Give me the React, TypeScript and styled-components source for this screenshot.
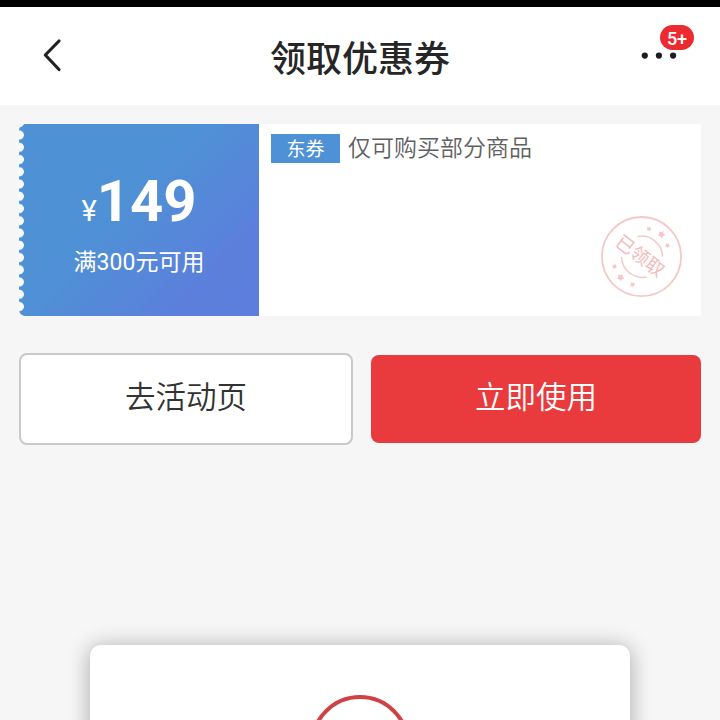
import React from "react";
import styled, { createGlobalStyle } from "styled-components";

const GlobalStyle = createGlobalStyle`
  * { box-sizing: border-box; }
  body {
    margin: 0;
    background: #f6f6f6;
    font-family: Roboto, "Noto Sans CJK SC", sans-serif;
  }
`;

const Screen = styled.div`
  width: 720px;
  height: 720px;
  overflow: hidden;
  display: flex;
  flex-direction: column;
  background: #f6f6f6;
`;

const StatusBar = styled.div`
  flex: none;
  height: 7px;
  background: #000;
`;

const Header = styled.header`
  flex: none;
  height: 98px;
  display: grid;
  grid-template-columns: 100px 1fr 100px;
  align-items: center;
  background: #fff;
`;

const IconButton = styled.button`
  position: relative;
  width: 100px;
  height: 98px;
  padding: 0;
  border: 0;
  background: none;
  font-family: inherit;

  svg { display: block; }
`;

const Title = styled.h1`
  margin: 7px 0 0;
  text-align: center;
  font-size: 36px;
  line-height: 52px;
  font-weight: 500;
  color: #262626;
`;

const Badge = styled.span`
  position: absolute;
  left: 40px;
  top: 18px;
  width: 34px;
  height: 25px;
  border-radius: 13px;
  background: #ec2b31;
  color: #fff;
  font-size: 18px;
  line-height: 27px;
  font-weight: 500;
  text-align: center;
`;

const Coupon = styled.section`
  flex: none;
  display: flex;
  height: 192px;
  margin: 19px 19px 0;
  background: #fff;
  border-radius: 6px 0 0 6px;
`;

const Value = styled.div`
  width: 240px;
  display: flex;
  flex-direction: column;
  align-items: center;
  border-radius: 6px 0 0 6px;
  background:
    radial-gradient(circle at 0.3px 50%, #f8fbfe 4.2px, transparent 5px) 0 4.9px / 6px 12.26px repeat-y,
    linear-gradient(135deg, #4e92d5 0%, #4e92d5 40%, #5c7fdc 80%, #5d7edc 100%);
  color: #fff;
`;

const Price = styled.div`
  display: flex;
  align-items: baseline;
  height: 68px;
  margin-top: 43px;
  line-height: 68px;
  font-size: 58px;
  font-weight: 700;
`;

const Currency = styled.span`
  font-size: 29px;
  font-weight: 400;
`;

const Threshold = styled.div`
  margin-top: 11px;
  font-size: 23px;
  line-height: 34px;
`;

const Details = styled.div`
  flex: 1;
  display: flex;
  flex-direction: column;
  justify-content: space-between;
  padding: 10px 19px 18px 12px;
`;

const Scope = styled.div`
  display: flex;
  gap: 8px;
  height: 29px;
`;

const Tag = styled.span`
  width: 69px;
  height: 29px;
  background: #4e92d5;
  color: #fff;
  font-size: 19px;
  line-height: 31px;
  text-align: center;
`;

const ScopeText = styled.span`
  font-size: 23px;
  line-height: 29px;
  font-weight: 350;
  color: #606060;
`;

const Stamp = styled.svg`
  align-self: flex-end;
  display: block;
`;

const Actions = styled.div`
  flex: none;
  display: flex;
  align-items: center;
  gap: 18px;
  padding: 37px 19px 0;
`;

const Action = styled.button<{ $primary?: boolean }>`
  width: ${(p) => (p.$primary ? 330 : 334)}px;
  height: ${(p) => (p.$primary ? 88 : 92)}px;
  padding: 0 0 8px;
  border: ${(p) => (p.$primary ? "0" : "2px solid #c9c9c9")};
  border-radius: 8px;
  background: ${(p) => (p.$primary ? "#e93b3d" : "#fff")};
  color: ${(p) => (p.$primary ? "#fff" : "#333")};
  font-family: "Noto Sans CJK SC", sans-serif;
  font-size: 30.5px;
  font-weight: 350;
  line-height: 44px;
`;

const Popup = styled.div`
  flex: none;
  width: 540px;
  height: 260px;
  margin: 200px auto 0;
  padding-top: 50px;
  display: flex;
  justify-content: center;
  border-radius: 11px;
  background: #fff;
  box-shadow: 0 2px 22px rgba(0, 0, 0, 0.32);
`;

const Ring = styled.div`
  width: 100px;
  height: 100px;
  border: 4px solid #d04045;
  border-radius: 50%;
`;

const stars: [number, number, number][] = [
  [48.5, 13, 2.6], [61, 18.5, 3.6], [67, 29.5, 2.6],
  [14, 50.5, 2.6], [20, 61.5, 3.6], [32, 68.5, 2.6],
];

const starPoints = (cx: number, cy: number, r: number) =>
  Array.from({ length: 10 }, (_, i) => {
    const a = (i * Math.PI) / 5 - Math.PI / 3;
    const d = i % 2 ? r * 0.6 : r * 1.1;
    return `${cx + d * Math.cos(a)},${cy + d * Math.sin(a)}`;
  }).join(" ");

export default function App() {
  return (
    <>
      <GlobalStyle />
      <Screen>
        <StatusBar />
        <Header>
          <IconButton aria-label="返回">
            <svg width="100" height="98" fill="none" stroke="#222" strokeWidth="3.2" strokeLinecap="round" strokeLinejoin="round">
              <path d="M59 34 45.3 48 59 62.5" />
            </svg>
          </IconButton>
          <Title>领取优惠券</Title>
          <IconButton aria-label="更多">
            <svg width="100" height="98" fill="#1c1d24">
              <circle cx="24.8" cy="48.6" r="3.1" />
              <circle cx="38.9" cy="48.6" r="3.1" />
              <circle cx="53.1" cy="48.6" r="3.1" />
            </svg>
            <Badge>5+</Badge>
          </IconButton>
        </Header>
        <Coupon>
          <Value>
            <Price>
              <Currency>¥</Currency>149
            </Price>
            <Threshold>满300元可用</Threshold>
          </Value>
          <Details>
            <Scope>
              <Tag>东券</Tag>
              <ScopeText>仅可购买部分商品</ScopeText>
            </Scope>
            <Stamp width="82" height="82" viewBox="0 0 82 82" fill="none" stroke="#f4c8c8">
              <circle cx="41.5" cy="40.6" r="39.6" strokeWidth="1.8" />
              <path d="M37.5 20.5a21 21 0 0 1 25 20M21.5 41a21 21 0 0 0 25 20" strokeWidth="1.5" />
              {stars.map(([x, y, r]) => (
                <polygon key={`${x}-${y}`} points={starPoints(x + 0.5, y, r)} fill="#f4c8c8" stroke="none" />
              ))}
              <text x="40" y="46.5" transform="rotate(37 40 40)" textAnchor="middle" fontSize="18.5" fill="#f2bcbc" stroke="none">
                已领取
              </text>
            </Stamp>
          </Details>
        </Coupon>
        <Actions>
          <Action>去活动页</Action>
          <Action $primary>立即使用</Action>
        </Actions>
        <Popup>
          <Ring />
        </Popup>
      </Screen>
    </>
  );
}
